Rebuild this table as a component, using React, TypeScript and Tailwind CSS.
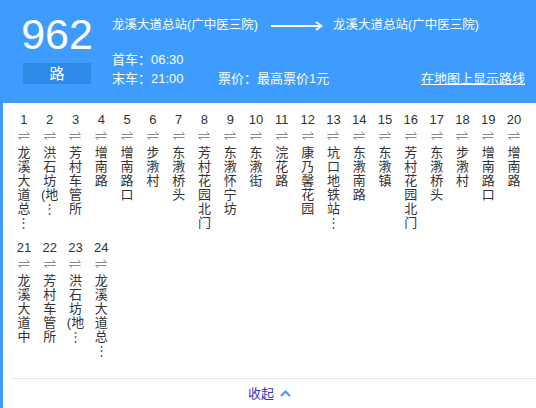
import React from "react";

const stops: string[][] = [
  ["龙", "溪", "大", "道", "总", "⋮"],
  ["洪", "石", "坊", "(地", "⋮"],
  ["芳", "村", "车", "管", "所"],
  ["增", "南", "路"],
  ["增", "南", "路", "口"],
  ["步", "漖", "村"],
  ["东", "漖", "桥", "头"],
  ["芳", "村", "花", "园", "北", "门"],
  ["东", "漖", "怀", "宁", "坊"],
  ["东", "漖", "街"],
  ["浣", "花", "路"],
  ["康", "乃", "馨", "花", "园"],
  ["坑", "口", "地", "铁", "站", "⋮"],
  ["东", "漖", "南", "路"],
  ["东", "漖", "镇"],
  ["芳", "村", "花", "园", "北", "门"],
  ["东", "漖", "桥", "头"],
  ["步", "漖", "村"],
  ["增", "南", "路", "口"],
  ["增", "南", "路"],
  ["龙", "溪", "大", "道", "中"],
  ["芳", "村", "车", "管", "所"],
  ["洪", "石", "坊", "(地", "⋮"],
  ["龙", "溪", "大", "道", "总", "⋮"],
];

function Harpoons() {
  return (
    <svg width="12" height="9" viewBox="0 0 12 9" fill="none" stroke="#8a8a8a" strokeWidth="1">
      <path d="M0.5 3.5 H11.5 L8.5 0.8" />
      <path d="M11.5 6.5 H0.5 L3.5 9" />
    </svg>
  );
}

export default function App() {
  const font = { fontFamily: '"Liberation Sans", "Noto Sans CJK SC", sans-serif' };
  return (
    <div className="w-[536px] h-[408px] overflow-hidden bg-white" style={font}>
      <div className="h-[103px] bg-[#3d9cfd] flex text-white">
        <div className="ml-[23px] w-[68px] pt-[13px] flex flex-col">
          <div className="flex justify-center text-[43px] leading-[43px]">962</div>
          <div className="mt-[7px] h-[21px] bg-[#2e8ae6] flex items-center justify-center text-[15px] leading-[21px]">
            路
          </div>
        </div>
        <div className="ml-[21px] flex-1 pt-[16px] pr-[11px] flex flex-col text-[13px]">
          <div className="flex items-center h-[19px] leading-[19px]">
            <span className="w-[159px] whitespace-nowrap text-[12.5px]">龙溪大道总站(广中医三院)</span>
            <svg width="52" height="10" viewBox="0 0 52 10" fill="none" stroke="white" strokeWidth="2">
              <path d="M0 5 H50" />
              <path d="M45 1 L50.5 5 L45 9" strokeWidth="1.8" />
            </svg>
            <span className="ml-[10px] whitespace-nowrap text-[12.5px]">龙溪大道总站(广中医三院)</span>
          </div>
          <div className="mt-[15px] h-[19px] leading-[19px]">首车：06:30</div>
          <div className="flex h-[19px] leading-[19px]">
            <span className="w-[106px]">末车：21:00</span>
            <span>票价：最高票价1元</span>
            <span className="ml-auto underline">在地图上显示路线</span>
          </div>
        </div>
      </div>
      <div className="border-l-[3px] border-[#3d9cfd] h-[305px]">
        <div className="pl-[8px] pt-[9px] flex flex-wrap">
          {stops.map((chars, i) => (
            <div key={i} className="w-[25.8px] h-[128px] flex flex-col items-center text-[#333333]">
              <div className="text-[13px] leading-[16px] h-[16px]">{i + 1}</div>
              <div className="h-[14px] flex items-center justify-center">
                <Harpoons />
              </div>
              <div className="mt-[4px] flex flex-col items-center">
                {chars.map((c, j) => (
                  <div
                    key={j}
                    className={`text-[13px] leading-[14px] h-[14px] whitespace-nowrap ${c === "⋮" ? "text-[#555]" : ""}`}
                  >
                    {c}
                  </div>
                ))}
              </div>
            </div>
          ))}
        </div>
        <div className="ml-[8px] mt-[10px] h-px bg-[#e6e6e6]" />
        <div className="h-[29px] flex items-center justify-center gap-[6px]">
          <span className="text-[13px] leading-[16px] text-[#3535c8]">收起</span>
          <svg width="11" height="7" viewBox="0 0 11 7" fill="none" stroke="#3d9cfd" strokeWidth="2">
            <path d="M1 6 L5.5 1.5 L10 6" />
          </svg>
        </div>
      </div>
    </div>
  );
}
